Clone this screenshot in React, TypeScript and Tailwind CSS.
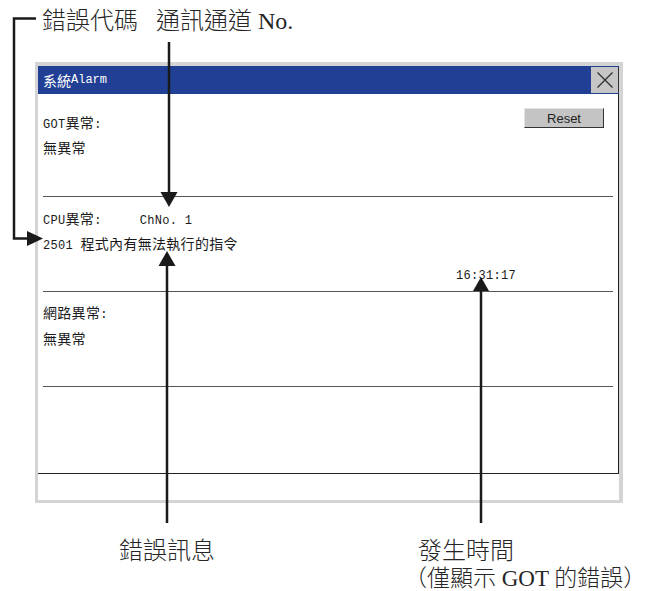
import React from "react";

const M = ({ t }: { t: string }) => (
  <>
    {t
      .split(/([\x20-\x7e]+)/)
      .filter((s) => s.length > 0)
      .map((s, i) =>
        /^[\x20-\x7e]+$/.test(s) ? (
          <span key={i} className="font-['Liberation_Mono',monospace] text-[12px] whitespace-pre">
            {s}
          </span>
        ) : (
          <span key={i}>{s}</span>
        )
      )}
  </>
);

const label =
  "absolute leading-none text-[#262626] font-light font-['Liberation_Serif','Noto_Sans_CJK_TC',serif] whitespace-nowrap";

export default function App() {
  return (
    <div className="relative w-[649px] h-[591px] overflow-hidden bg-white font-['Noto_Sans_CJK_TC',sans-serif] text-[#1a1a1a]">
      {/* Window */}
      <div className="ml-[35px] mt-[62px] w-[588px] h-[441px] border-[#d4d4d4] border-t-4 border-b-[3px] border-l-[3px] border-r-4 bg-white flex flex-col">
        {/* Title bar */}
        <div className="h-[28px] bg-[#203f95] flex items-start shrink-0">
          <div className="flex-1 h-[27px] flex items-center pl-[5px] text-white text-[14px] leading-none">
            <M t="系統Alarm" />
          </div>
          <div className="w-[28px] h-[26px] mt-[1px] bg-[#c6c6c6] border-r border-[#333] flex items-center justify-center">
            <svg width="16" height="16" viewBox="0 0 16 16">
              <path d="M0.5 0.5 L15.5 15.5 M15.5 0.5 L0.5 15.5" stroke="#2a2a2a" strokeWidth="1.2" fill="none" />
            </svg>
          </div>
        </div>

        {/* Content */}
        <div className="h-[380px] shrink-0 border-r border-b border-[#222] flex flex-col text-[14px] leading-[22px] tracking-[0.3px]">
          <div className="h-[103px] mx-[5px] border-b border-[#555] flex justify-between shrink-0">
            <div className="pt-[17px]">
              <div><M t="GOT異常:" /></div>
              <div>無異常</div>
            </div>
            <div className="mt-[14px] mr-[9px] w-[80px] h-[20px] bg-[#c4c4c4] border-t border-l border-[#e4e4e4] border-r border-b border-r-[#333] border-b-[#333] flex items-center justify-center font-['Liberation_Sans',sans-serif] text-[13px] leading-none text-[#222] tracking-normal">
              Reset
            </div>
          </div>
          <div className="h-[95px] mx-[5px] border-b border-[#555] pt-[10px] shrink-0">
            <div>
              <M t="CPU異常:" />
              <span className="ml-[38px]">
                <M t="ChNo. 1" />
              </span>
            </div>
            <div>
              <M t="2501 程式內有無法執行的指令" />
            </div>
            <div className="mt-[5px] ml-[413px]">
              <M t="16:31:17" />
            </div>
          </div>
          <div className="h-[95px] mx-[5px] border-b border-[#555] pt-[9px] shrink-0">
            <div>網路異常<M t=":" /></div>
            <div className="mt-[1px]">無異常</div>
          </div>
          <div className="flex-1" />
        </div>
        <div className="flex-1" />
      </div>

      {/* Annotation drawing */}
      <svg className="absolute inset-0 pointer-events-none" width="649" height="591" viewBox="0 0 649 591">
        <g stroke="#1a1a1a" strokeWidth="2.5" fill="none">
          <path d="M36 18.5 H14 V238.5 H28" />
          <path d="M169 42 V193" />
          <path d="M167 265 V523" />
          <path d="M481 290 V523" />
        </g>
        <g fill="#1a1a1a">
          <polygon points="27,231 43,238.5 27,246" />
          <polygon points="160.5,192 177.5,192 169,207" />
          <polygon points="167,251 158.5,266 175.5,266" />
          <polygon points="481,277 473,291 489,291" />
        </g>
      </svg>

      {/* Annotation labels */}
      <div className={`${label} left-[42px] top-[9px] text-[24px]`}>錯誤代碼</div>
      <div className={`${label} left-[156px] top-[9px] text-[24px]`}>通訊通道 No.</div>
      <div className={`${label} left-[119px] top-[539px] text-[24px]`}>錯誤訊息</div>
      <div className={`${label} left-[418px] top-[539px] text-[24px]`}>發生時間</div>
      <div className={`${label} left-[404px] top-[567px] text-[23px]`}>（僅顯示 GOT 的錯誤）</div>
    </div>
  );
}
